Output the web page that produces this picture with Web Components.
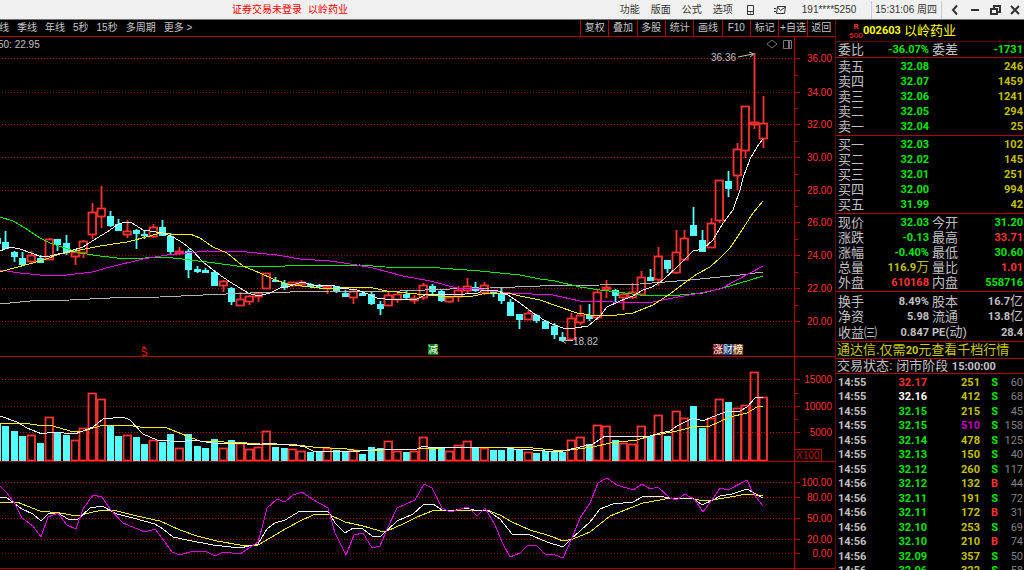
<!DOCTYPE html>
<html lang="zh-CN">
<head>
<meta charset="utf-8">
<title>以岭药业 002603</title>
<style>
html, body { margin: 0; height: 100%; background: #000; }
body { font-family: "Liberation Sans", "Noto Sans CJK SC", sans-serif; overflow: hidden; }
</style>
</head>
<body>
<trading-app></trading-app>
<script>
const RED = '#ff3232', CYAN = '#54ffff', LINE = '#b40000', DIM = '#640000';

class View extends HTMLElement {
  connectedCallback() {
    const t = document.createElement('template');
    t.innerHTML = `<style>*{box-sizing:border-box}button{all:unset;box-sizing:border-box;white-space:nowrap;cursor:pointer}${this.css()}</style>${this.html()}`;
    this.attachShadow({ mode: 'open' }).append(t.content.cloneNode(true));
  }
}

customElements.define('trading-app', class extends View {
  css() { return `
    :host{display:grid;grid-template-rows:20px minmax(0,1fr);height:100vh;min-height:400px;background:#000}
    main{display:grid;grid-template-columns:minmax(0,1fr) 189px;min-height:0}
    .charts{display:grid;grid-template-rows:17px minmax(0,320fr) minmax(0,105fr) minmax(0,108fr);min-height:0}`; }
  html() { return `<app-bar><span slot="login">证券交易未登录</span><span slot="stock">以岭药业</span></app-bar>
    <main><div class="charts"><period-tabs></period-tabs><price-chart></price-chart><volume-chart></volume-chart><kdj-chart></kdj-chart></div>
    <quote-panel></quote-panel></main>`; }
});

customElements.define('app-bar', class extends View {
  css() { return `
    :host{display:flex;align-items:center;background:#f0f0f0;border-bottom:1px solid #707470;font-size:10px;line-height:18px;color:#333}
    .alert{flex:1;display:flex;justify-content:center;gap:6px;color:#f00;padding-right:40px;white-space:nowrap}
    nav{display:flex;gap:11px}
    .tools{display:flex;align-items:center;gap:19px;padding:0 16px 0 13px}
    .user{padding:0 15px 0 0}
    .time{border:solid #ccc;border-width:0 1px;padding:0 4px 0 3px;white-space:nowrap}
    .win{display:flex;gap:8px;padding:0 3px 0 7px}
    svg{display:block;fill:none;stroke:#333}`; }
  html() { return `<div class="alert"><slot name="login"></slot><slot name="stock"></slot></div>
    <nav>${['功能', '版面', '公式', '选项'].map(m => `<button>${m}</button>`).join('')}</nav>
    <div class="tools"><button aria-label="手机"><svg width="9" height="10"><path d="M1.5.5h6v9h-6zM1.5 6.5h6M4 8h1"/></svg></button>
    <button aria-label="消息"><svg width="12" height="10"><path d="M3.5 1.5h8l-1 7h-8zM3.5 2l3 3.5 5-3.5M0 3.5h2M0 6.5h2"/></svg></button></div>
    <span class="user">191****5250</span><time class="time">15:31:06 周四</time>
    <div class="win">
    <button aria-label="返回"><svg width="12" height="12" stroke-width="2"><path d="M8 1.500L4 6l4 4.500"/></svg></button>
    <button aria-label="最小化"><svg width="12" height="12" stroke-width="2"><path d="M2 6h8"/></svg></button>
    <button aria-label="还原"><svg width="12" height="12" stroke-width="2"><path d="M2 5h6v5H2zM5 4V2h6v6H9"/></svg></button>
    <button aria-label="关闭"><svg width="12" height="12" stroke-width="2"><path d="M2 2l8 8M10 2l-8 8"/></svg></button></div>`; }
});

customElements.define('period-tabs', class extends View {
  css() { return `
    :host{display:flex;justify-content:space-between;border-bottom:1px solid ${LINE};font-size:10px;line-height:16px;color:#c8c8c8;overflow:hidden}
    .periods{display:flex;gap:8px;margin-left:-11px}
    .actions{display:grid;grid-template-columns:repeat(9,1fr);width:255px}
    .actions button{border-left:1px solid ${LINE};text-align:center}`; }
  html() { return `<div class="periods">${['月线', '季线', '年线', '5秒', '15秒', '多周期', '更多 &gt;'].map(t => `<button>${t}</button>`).join('')}</div>
    <div class="actions">${['复权', '叠加', '多股', '统计', '画线', 'F10', '标记', '+自选', '返回'].map(t => `<button>${t}</button>`).join('')}</div>`; }
});

/* One row per trading day, on screen coordinates: up flag, high, body top, body bottom, low, volume top. */
const DAYS = `0 231 242 248 249 426,0 251 252 256 262 431,0 252 258 264 265 436,1 251 255 261 264 435,0 255 258 262 263 443,1 238 239 259 260 417,0 239 239 244 251 433,0 235 243 252 255 435,1 251 252 256 265 440,1 240 241 252 258 428,
1 203 212 234 239 393,1 186 208 216 228 399,0 211 216 225 227 426,0 219 224 230 231 436,1 220 231 234 238 435,0 229 230 233 249 437,0 231 234 235 239 444,1 224 227 236 238 440,0 220 227 235 235 442,0 233 236 251 255 434,
1 247 251 253 255 448,0 249 251 269 278 434,0 266 269 271 273 446,0 268 270 272 273 448,0 270 272 285 286 439,1 280 281 285 292 448,0 287 288 301 305 440,1 292 299 305 305 443,1 295 296 301 305 449,1 293 293 296 302 447,
1 273 273 288 289 431,0 277 280 281 282 447,0 280 283 287 290 448,1 282 282 285 287 449,1 280 282 284 287 451,0 283 284 286 287 452,0 284 285 286 288 452,1 285 286 288 294 448,0 286 286 291 293 450,0 290 293 296 296 452,
1 290 291 297 304 450,0 292 293 295 296 454,0 291 294 303 305 447,0 301 304 308 315 448,1 291 295 305 305 441,1 292 294 299 303 451,0 291 294 297 300 452,1 295 298 300 304 451,1 283 285 297 300 437,0 284 286 291 294 447,
0 289 291 300 302 447,1 297 297 301 303 451,1 286 290 296 302 445,1 278 286 290 293 441,0 282 287 290 292 448,1 282 285 292 295 448,0 290 291 293 297 450,0 287 293 300 304 450,0 299 302 315 315 448,0 314 314 319 329 449,
1 310 313 319 320 452,0 314 315 320 323 453,0 320 321 328 328 451,0 323 326 334 339 451,0 332 337 340 342 452,1 313 318 339 340 440,1 305 315 322 325 437,0 304 315 318 321 444,1 290 292 317 320 425,1 280 287 289 298 426,
0 289 290 295 302 440,1 293 294 297 310 443,1 283 292 297 299 444,1 271 277 294 295 426,0 269 277 280 281 436,1 247 256 279 286 415,0 260 260 268 273 436,1 230 252 272 274 411,1 230 238 259 261 418,0 207 225 235 236 406,
0 230 240 251 252 428,1 218 223 247 248 418,1 180 180 220 223 399,0 171 181 188 197 402,1 143 149 175 190 408,1 106 106 150 158 405,1 53 122 124 129 372,1 96 123 138 148 397`
  .split(',').map(r => r.trim().split(' ').map(Number));
const dayX = i => Math.round(5 + i * 8.71);
const curve = (color, points) => `<polyline points="${points}" fill="none" stroke="${color}" shape-rendering="crispEdges"/>`;

class Chart extends View {
  css() { return `:host{display:block;min-height:0;overflow:hidden}svg{display:block;width:100%;height:100%}text{font-size:10px}.axis{fill:${RED};text-anchor:end}`; }
  html() {
    const { top, height, levels, minors, bottom } = this.spec;
    return `<svg viewBox="0 ${top} 835 ${height}" preserveAspectRatio="none">
      ${levels.map(([y, , dim]) => `<path d="M2 ${y}.5H794" stroke="${dim ? '#860000' : '#c00000'}" stroke-dasharray="1 2" shape-rendering="crispEdges"/>`).join('')}
      ${this.plot()}
      <path d="M794.5 ${top}V${top + height}M0 ${bottom}.5H835${levels.map(([y]) => `M795 ${y}.5h5`).join('')}${minors.map(y => `M795 ${y}.5h3`).join('')}" stroke="${LINE}" shape-rendering="crispEdges"/>
      ${levels.map(([y, label]) => `<text class="axis" x="832" y="${y + 4}">${label}</text>`).join('')}${this.extra()}</svg>`;
  }
  extra() { return ''; }
}

customElements.define('price-chart', class extends Chart {
  spec = { top: 37, height: 320, bottom: 356, minors: [75, 108, 141, 174, 206, 239, 272, 305],
    levels: [[58, '36.00'], [92, '34.00', 1], [124, '32.00'], [157, '30.00'], [190, '28.00'], [222, '26.00', 1], [255, '24.00', 1], [288, '22.00'], [321, '20.00']] };
  plot() {
    const candles = DAYS.map(([up, hi, a, b, lo], i) => {
      const x = dayX(i);
      return up
        ? `<path d="M${x + .5} ${hi}V${a}M${x + .5} ${b}V${lo}" stroke="${RED}" stroke-width="1.8"/><rect x="${x - 3.5}" y="${a + .5}" width="7.500" height="${b - a}" fill="none" stroke="${RED}" stroke-width="1.8"/>`
        : `<path d="M${x + .5} ${hi}V${lo}" stroke="${CYAN}" stroke-width="1.8"/><rect x="${x - 3}" y="${a}" width="7" height="${b - a + 1}" fill="${CYAN}"/>`;
    }).join('');
    return `<rect x="0" y="238" width="1" height="6" fill="${CYAN}"/>${candles}
    ${curve('#b4b4b4', '0,304 30,301 70,300 110,298 160,297 203,295 250,293 330,291 400,291 450,289 490,288 540,286 600,285 640,284 690,280 710,278 740,275 763,272')}
    ${curve('#00f000', '0,217 13,221 25,228 40,238 50,243 68,249 80,253 100,256 117,258 145,258 165,257 190,260 215,263 237,266 270,267 285,266 360,265 385,267 440,268 480,271 500,273 520,275 540,279 555,281 580,287 600,290 617,292 640,295 680,295 703,293 723,288 740,283 750,280 763,276')}
    ${curve('#f000f0', '0,270 20,273 40,275 67,275 92,272 110,267 143,259 167,255 187,253 207,251 247,252 277,255 300,259 330,261 357,265 373,268 403,276 430,281 457,288 473,288 490,291 510,293 553,295 580,301 613,302 653,302 673,298 700,293 720,289 737,280 750,273 763,266')}
    ${curve('#f0f000', '0,272 10,269 33,263 43,260 60,254 80,250 100,246 127,242 150,236 160,233 170,234 190,234 200,238 213,247 227,253 243,266 260,273 273,279 287,284 310,287 327,289 350,287 373,288 387,291 417,294 450,297 473,296 487,293 508,293 520,296 540,300 557,306 577,313 597,316 617,315 633,313 653,305 670,294 687,281 697,274 710,267 720,258 730,248 740,233 753,213 763,201')}
    ${curve('#f0f0f0', '0,251 10,247 20,249 42,257 50,256 67,252 83,247 97,238 107,232 117,225 124,222 132,223 143,230 163,233 173,237 183,243 193,251 203,262 217,273 230,282 240,288 248,293 258,296 270,293 280,288 290,286 302,282 313,285 333,285 340,288 357,290 368,294 377,298 385,299 410,300 417,299 427,294 452,295 478,293 483,290 498,291 508,295 520,303 533,313 547,322 563,328 575,328 588,326 600,316 607,307 620,301 633,296 643,290 652,287 663,280 677,267 693,251 703,249 713,240 723,223 733,210 740,190 743,178 750,159 757,147 763,139')}`;
  }
  extra() {
    const badge = (x, color, t) => `<rect x="${x}" y="344" width="10" height="11" fill="${color}"/><text x="${x}" y="353" fill="#fff">${t}</text>`;
    return `<text x="-2" y="48" fill="#c0c0c0">50: 22.95</text>
    <g fill="#c0c0c0" stroke="none"><text x="711" y="61">36.36</text><text x="573" y="345">18.82</text></g>
    <g fill="none" stroke="#c0c0c0"><path d="M738 57l15-3M749 52l5 2-4 3M573 340.500H563M566 338l-4 2.500 4 3"/>
    <path stroke="#777" d="M772 40l5 4-5 4-5-4zM783.500 40.500h8v8h-8z"/></g><path fill="#777" d="M788 41h2v7h-2z"/>
    <path d="M142 347.500h4M144 346v2" stroke="#f00"/><text x="141" y="356" fill="#f00">S</text>
    ${badge(428, '#007800', '减')}${badge(713, '#780000', '涨')}${badge(723, '#003c78', '财')}${badge(733, '#8a4600', '榜')}`;
  }
});

customElements.define('volume-chart', class extends Chart {
  spec = { top: 357, height: 105, bottom: 461, minors: [393, 419],
    levels: [[379, '15000'], [406, '10000', 1], [432, '5000']] };
  plot() {
    return `<rect x="0" y="424" width="1" height="37" fill="${CYAN}"/>` + DAYS.map(([up, , , , , v], i) => up
      ? `<rect x="${dayX(i) - 3.5}" y="${v + .5}" width="7.500" height="${460 - v}" fill="none" stroke="${RED}" stroke-width="1.8"/>`
      : `<rect x="${dayX(i) - 3}" y="${v}" width="7" height="${461 - v}" fill="${CYAN}"/>`).join('') +
    curve('#f0f000', '0,424 23,423 37,425 53,426 70,431 80,432 100,426 125,425 140,427 167,428 187,436 200,441 247,443 260,444 297,445 313,447 347,449 360,451 383,450 417,449 467,447 507,447 533,448 563,451 593,447 610,443 637,440 650,436 677,431 693,427 710,426 730,417 747,413 757,407 763,406') +
    curve('#f0f0f0', '0,416 17,422 27,428 42,434 53,432 75,434 93,427 103,419 123,417 130,420 143,434 157,440 170,441 180,442 193,440 213,443 247,444 258,445 267,443 277,444 300,446 305,447 313,451 360,451 387,449 417,449 423,446 433,448 480,447 503,447 513,449 533,450 557,452 563,451 580,447 593,444 605,436 650,436 660,433 670,431 677,426 693,418 703,421 712,417 720,414 728,411 740,411 747,407 755,398 763,397');
  }
  extra() { return `<path d="M795 449.500h26.500V461" fill="none" stroke="${LINE}"/><text x="796" y="459" fill="#c00000">X100</text>`; }
});

customElements.define('kdj-chart', class extends Chart {
  spec = { top: 462, height: 108, bottom: 568, minors: [],
    levels: [[482, '100.00'], [497, '80.00'], [518, '50.00'], [539, '20.00'], [553, '0.00', 1]] };
  plot() {
    return curve('#f0f000', '0,502 17,502 27,506 40,511 60,513 77,516 93,512 103,510 117,511 137,516 160,521 180,530 197,536 217,541 240,545 258,545 270,538 287,528 300,521 313,515 328,514 345,522 363,526 380,531 387,531 403,524 417,517 432,511 460,510 487,510 500,515 512,522 530,530 547,535 553,537 563,541 573,539 590,532 600,524 610,516 625,510 643,503 660,500 670,498 690,498 703,501 712,500 730,497 747,494 763,496') +
    curve('#f0f0f0', '0,497 7,498 22,509 33,514 41,521 48,514 58,513 68,519 77,520 90,508 102,506 117,514 133,518 155,524 163,529 173,537 187,540 213,545 240,548 258,544 267,529 275,523 285,520 300,511 328,511 335,523 345,533 353,528 363,529 372,536 380,537 397,521 413,514 423,505 433,504 442,510 450,511 467,508 477,511 487,510 500,519 512,534 528,534 547,542 563,547 570,540 590,522 600,509 613,504 633,502 642,497 658,496 675,499 693,498 702,505 713,500 720,496 732,494 747,489 763,498') +
    curve('#e000e0', '0,486 7,493 15,504 22,518 33,526 41,537 48,517 58,513 67,525 76,529 83,509 93,495 102,497 110,509 123,523 145,532 155,529 162,538 172,552 180,555 193,551 207,552 215,556 223,552 240,554 258,542 262,528 267,508 277,499 285,502 293,495 302,492 312,499 328,508 335,533 346,555 354,535 363,533 372,548 380,546 388,527 397,508 415,500 424,484 432,488 442,508 450,512 468,507 477,516 485,508 495,525 502,542 510,557 520,553 528,545 537,546 545,554 555,555 563,558 572,538 580,518 590,503 598,483 607,478 617,485 633,490 642,484 650,489 658,487 670,498 677,500 685,494 695,500 703,512 712,500 720,488 728,490 747,480 753,493 763,506');
  }
});

customElements.define('quote-panel', class extends View {
  css() { return `
    :host{display:flex;flex-direction:column;min-height:0;overflow:hidden;border-left:1px solid ${DIM};font-size:13px;line-height:15px;color:#c0c0c0;white-space:nowrap}
    header{display:flex;flex:none;align-items:center;height:22px;padding-left:13px;border-bottom:1px solid ${DIM};color:#ff0}
    .badge{display:flex;flex-direction:column;width:14px;align-items:center;color:${RED};font-size:8px;line-height:9px}
    .badge b{font-size:8px}
    b,td{font-family:Roboto,"Noto Sans CJK SC",sans-serif;font-size:11px;font-weight:700}
    h1{margin:0;padding-left:3px;font-size:13px;font-weight:400}
    table{border-collapse:separate;border-spacing:0;table-layout:fixed;width:100%;flex:none;border-bottom:1px solid ${LINE};padding:0 0 0 2px}
    .five{padding:1px 0 1px 2px}
    .three{padding:2px 0 1px 2px}
    tr{height:15px}
    th{font-weight:400;text-align:left;padding:0;line-height:15px}
    td+th{padding-left:2px}
    td{text-align:right;padding:0 1px 0 0;line-height:15px}
    td i{font-style:normal;font-weight:400;font-size:13px;line-height:11px}
    .g{color:#00e600}.r{color:${RED}}.y{color:#c0c000}.w{color:#fff}.m{color:#c000c0}.n{color:#808080;font-weight:400}
    p{margin:0;padding-left:1px;border-bottom:1px solid ${LINE};flex:none;height:15px;line-height:14px}
    .promo{height:17px;line-height:16px;color:#c8c800}
    .promo a{color:inherit;text-decoration:none}
    .ticks{border:0;padding-top:1px}
    .ticks tr:nth-child(even){height:14px}
    .ticks td{line-height:14px}
    .ticks td:first-child{text-align:left}`; }
  html() {
    const cols = '<colgroup><col style="width:36px"><col style="width:56px"><col style="width:38px"><col></colgroup>';
    const pairs = (cls, rows) => `<table class="${cls}">${cols}${rows.map(([a, b, c, d, e, f]) => `<tr><th>${a}</th><td class="${c}">${b}</td><th>${d}</th><td class="${f}">${e}</td></tr>`).join('')}</table>`;
    const book = rows => `<table class="five">${cols}${rows.map(([a, b, c]) => `<tr><th>${a}</th><td class="g">${b}</td><td></td><td class="y">${c}</td></tr>`).join('')}</table>`;
    const ticks = `55 32.17 251 S 60,55 32.16 412 S 68,55 32.15 215 S 45,55 32.15 510 S 158,55 32.14 478 S 125,55 32.13 150 S 40,55 32.12 260 S 117,56 32.12 132 B 44,56 32.11 191 S 72,56 32.11 172 B 31,56 32.10 253 S 69,56 32.10 210 B 74,56 32.09 357 S 50,56 32.06 322 S 58`.split(',').map(r => r.split(' '));
    return `<header><span class="badge"><b>R</b><span>500</span></span><b>002603</b><h1>以岭药业</h1></header>
    ${pairs('', [['委比', '-36.07%', 'g', '委差', '-1731', 'g']])}
    ${book([['卖五', '32.08', 246], ['卖四', '32.07', 1459], ['卖三', '32.06', 1241], ['卖二', '32.05', 294], ['卖一', '32.04', 25]])}
    ${book([['买一', '32.03', 102], ['买二', '32.02', 145], ['买三', '32.01', 251], ['买四', '32.00', 994], ['买五', '31.99', 42]])}
    ${pairs('five', [['现价', '32.03', 'g', '今开', '31.20', 'g'], ['涨跌', '-0.13', 'g', '最高', '33.71', 'r'], ['涨幅', '-0.40%', 'g', '最低', '30.60', 'g'], ['总量', '116.9<i>万</i>', 'y', '量比', '1.01', 'r'], ['外盘', '610168', 'r', '内盘', '558716', 'g']])}
    ${pairs('three', [['换手', '8.49%', '', '股本', '16.7<i>亿</i>', ''], ['净资', '5.98', '', '流通', '13.8<i>亿</i>', ''], ['收益㈢', '0.847', '', '<b>PE</b>(动)', '28.4', '']])}
    <p class="promo"><a href="#">通达信.仅需<b>20</b>元查看千档行情</a></p>
    <p>交易状态: 闭市阶段 <b>15:00:00</b></p>
    <table class="ticks"><colgroup><col style="width:36px"><col style="width:54px"><col style="width:53px"><col style="width:18px"><col></colgroup>
    ${ticks.map(([t, p, v, s, n], i) => `<tr><td>14:${t}</td><td class="${['r', 'w'][i] || 'g'}">${p}</td><td class="${v === '510' ? 'm' : 'y'}">${v}</td><td class="${s === 'S' ? 'g' : 'r'}">${s}</td><td class="n">${n}</td></tr>`).join('')}</table>`;
  }
});
</script>
</body>
</html>
